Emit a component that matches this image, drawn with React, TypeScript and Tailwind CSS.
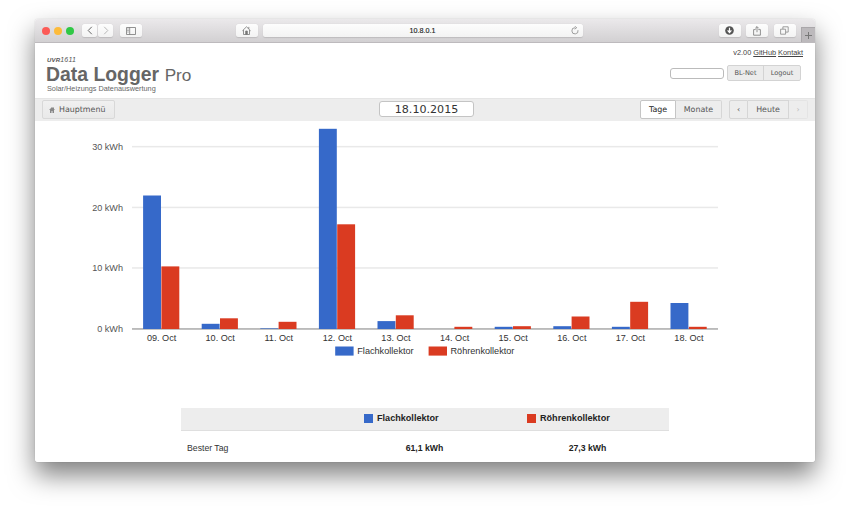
import type { ReactNode } from 'react';

const BASE = 329;
const days = [
  { label: '09. Oct', flach: 195.5, roehren: 266.4 },
  { label: '10. Oct', flach: 323.8, roehren: 318.3 },
  { label: '11. Oct', flach: 328.4, roehren: 321.8 },
  { label: '12. Oct', flach: 128.8, roehren: 224.3 },
  { label: '13. Oct', flach: 321.1, roehren: 315.3 },
  { label: '14. Oct', flach: 329, roehren: 326.8 },
  { label: '15. Oct', flach: 326.8, roehren: 326.2 },
  { label: '16. Oct', flach: 326.2, roehren: 316.5 },
  { label: '17. Oct', flach: 326.8, roehren: 301.8 },
  { label: '18. Oct', flach: 303, roehren: 326.8 },
];
const ticks = [
  { label: '30 kWh', y: 146.7 },
  { label: '20 kWh', y: 207.5 },
  { label: '10 kWh', y: 268 },
  { label: '0 kWh', y: 329 },
];

function BrowserButton({ className, children }: { className: string; children?: ReactNode }) {
  return (
    <div className={`flex h-[13.5px] items-center justify-center rounded-[2.5px] bg-gradient-to-b from-[#fdfdfd] to-[#f3f3f3] shadow-[0_0.5px_1px_rgba(0,0,0,0.12)] ${className}`}>
      {children}
    </div>
  );
}

function TitleBar() {
  return (
    <div className="relative flex h-6 shrink-0 items-center border-b border-[#bdbabd] bg-gradient-to-b from-[#ebe9eb] to-[#d2d0d2] pl-[7px]">
      <div className="flex w-8 justify-between">
        <span className="size-2 rounded-full bg-[#fc5b57]" />
        <span className="size-2 rounded-full bg-[#fdbb3b]" />
        <span className="size-2 rounded-full bg-[#30c846]" />
      </div>
      <BrowserButton className="ml-2 w-[15px]">
        <svg width="6" height="9" viewBox="0 0 6 9" fill="none" stroke="#686868" strokeWidth="1"><path d="M4.8 .8 1.2 4.5l3.6 3.7" /></svg>
      </BrowserButton>
      <BrowserButton className="ml-px w-[15px]">
        <svg width="6" height="9" viewBox="0 0 6 9" fill="none" stroke="#b8b8b8" strokeWidth="1"><path d="M1.2.8l3.6 3.7-3.6 3.7" /></svg>
      </BrowserButton>
      <BrowserButton className="ml-[6.5px] w-[22px]">
        <svg width="10" height="8" viewBox="0 0 10 8" fill="none" stroke="#777" strokeWidth=".8"><path d="M.5.5h9v7h-9zM3.7.5v7M1.4 2h1.2M1.4 3.5h1.2M1.4 5h1.2" /></svg>
      </BrowserButton>
      <BrowserButton className="ml-[94px] w-[22px]">
        <svg width="9" height="9" viewBox="0 0 9 9" fill="none" stroke="#777" strokeWidth=".8"><path d="M.4 4.8 4.5.8l4.1 4M1.5 4v4.5h6V4M6.8.9v2" /><path d="M3.7 8.3V5h1.6v3.3z" fill="#777" /></svg>
      </BrowserButton>
      <BrowserButton className="relative ml-[5px] w-[320px] text-[7.2px] text-[#222] [-webkit-text-stroke:0.15px_#222]">
        <span className="pt-[2px]">10.8.0.1</span>
        <svg className="absolute right-[4px]" width="8" height="9" viewBox="0 0 8 9" fill="none" stroke="#888" strokeWidth=".8"><path d="M4 1.7a3.1 3.1 0 1 0 3 2.5M3.7.2l2 1.5-2 1.5" /></svg>
      </BrowserButton>
      <BrowserButton className="ml-auto w-[22px]">
        <svg width="9" height="9" viewBox="0 0 9 9"><circle cx="4.5" cy="4.5" r="4.3" fill="#555" /><path d="M4.5 1.8v3.8M2.6 4.4l1.9 2.1 1.9-2.1" fill="none" stroke="#fff" strokeWidth="1.2" /></svg>
      </BrowserButton>
      <BrowserButton className="ml-[5.5px] w-[22px]">
        <svg width="8" height="10" viewBox="0 0 8 10" fill="none" stroke="#777" strokeWidth=".8"><path d="M2.7 3.6H.6v5.6h6.8V3.6H5.3M4 6.2V.7M2.2 2.4 4 .6l1.8 1.8" /></svg>
      </BrowserButton>
      <BrowserButton className="ml-[5.5px] mr-[5px] w-[22px]">
        <svg width="9" height="9" viewBox="0 0 9 9" fill="none" stroke="#888" strokeWidth=".8"><path d="M.6 3.2h5v5h-5zM2.9 3V.8h5.3v5.3H5.7" /></svg>
      </BrowserButton>
      <div className="flex h-[15px] w-[14.5px] items-center justify-center self-end border-l border-t border-[#aaa7aa] bg-[#bcb9bc]">
        <svg width="7" height="7" viewBox="0 0 7 7" stroke="#777" strokeWidth="1"><path d="M3.5 0v7M0 3.5h7" /></svg>
      </div>
    </div>
  );
}

function PageHeader() {
  return (
    <header className="flex h-[54.5px] shrink-0 justify-between pl-3 pr-3">
      <div className="flex flex-col whitespace-nowrap pt-[13px] text-[#666]">
        <div className="h-[7px] text-[7px] italic leading-[7px] tracking-[0.2px] text-[#555]"><b className="text-[6px]">UVR</b>1611</div>
        <h1 className="h-[21px] -ml-px flex items-baseline gap-[5.5px] text-[19.4px] font-bold leading-[23px]">
          <span>Data Logger</span>
          <span className="text-[17.2px] font-normal">Pro</span>
        </h1>
        <p className="text-[7.3px] leading-[10px]">Solar/Heizungs Datenauswertung</p>
      </div>
      <div className="flex flex-col items-end">
        <div className="flex gap-[2px] pt-[5px] text-[7.35px] leading-[10px] text-[#444]">
          <span>v2.00</span>
          <span className="underline">GitHub</span>
          <span className="underline">Kontakt</span>
        </div>
        <div className="mt-[7px] mr-[2px] flex items-center font-['DejaVu_Sans',sans-serif] text-[6.6px] text-[#555]">
          <div className="mr-[3px] h-[11px] w-[54px] rounded-[3px] border border-[#bbb] bg-white" />
          <div className="flex h-4 rounded-[2px] border border-[#d3d3d3] bg-[#ececec]">
            <div className="flex w-[36px] items-center justify-center border-r border-[#d3d3d3] pt-[2px]">BL-Net</div>
            <div className="flex w-[36px] items-center justify-center pt-[2px]">Logout</div>
          </div>
        </div>
      </div>
    </header>
  );
}

function Toolbar() {
  return (
    <nav className="flex h-[23.5px] shrink-0 items-center border-t border-[#e5e5e5] bg-[#ededed] pl-[7px] pr-[7px] pb-px font-['DejaVu_Sans',sans-serif] text-[7.9px] text-[#555]">
      <div className="flex h-[18.5px] w-[73px] items-center rounded-[2px] border border-[#d8d8d8] bg-gradient-to-b from-[#f0f0f0] to-[#e9e9e9] pl-[6px] pt-px">
        <svg width="6" height="6" viewBox="0 0 6 6" fill="#888"><path d="M3 0 0 3h1v3h1.5V4h1v2H5V3h1L5 2V.4H4v.7z" /></svg>
        <span className="ml-[4px]">Hauptmenü</span>
      </div>
      <div className="ml-[264px] flex h-[16px] w-[95px] items-center justify-center rounded-[3px] border border-[#c4c4c4] bg-white pt-[2px] text-[11.1px] text-[#333]">18.10.2015</div>
      <div className="ml-auto flex h-[19px]">
        <div className="flex w-[36px] items-center justify-center rounded-l-[2px] border border-[#c5c5c5] bg-white pt-px text-[#222]">Tage</div>
        <div className="flex w-[46px] items-center justify-center rounded-r-[2px] border border-l-0 border-[#d6d6d6] pt-px">Monate</div>
      </div>
      <div className="ml-[7px] flex h-[19px]">
        <div className="flex w-[19px] items-center justify-center rounded-l-[2px] border border-[#d6d6d6] pt-px">‹</div>
        <div className="flex w-[41px] items-center justify-center border-y border-r border-[#d6d6d6] pt-px">Heute</div>
        <div className="flex w-[19px] items-center justify-center rounded-r-[2px] border border-l-0 border-[#e4e4e4] pt-px text-[#bbb]">›</div>
      </div>
    </nav>
  );
}

function Chart() {
  return (
    <svg className="block shrink-0" width="780" height="240" viewBox="35 121 780 240" fontSize="9.1" fill="#333">
      {ticks.map((t) => (
        <g key={t.label}>
          {t.y < BASE && <rect x="132" y={t.y - 0.8} width="586" height="1.5" fill="#e9e9e9" />}
          <text x="123" y={t.y + 3.2} textAnchor="end" fill="#555">{t.label}</text>
        </g>
      ))}
      <rect x="132" y="328.2" width="586" height="1.5" fill="#aaa" />
      {days.map((d, i) => {
        const x = 143.1 + i * 58.6;
        return (
          <g key={d.label}>
            <rect x={x} y={d.flach} width="17.9" height={BASE - d.flach} fill="#3669c9" />
            <rect x={x + 18.3} y={d.roehren} width="17.9" height={BASE - d.roehren} fill="#da3b21" />
            <text x={x + 18.5} y="341.3" textAnchor="middle">{d.label}</text>
          </g>
        );
      })}
      <rect x="335.2" y="346.5" width="18.4" height="9.1" fill="#3669c9" />
      <text x="357.3" y="354.4" fontSize="9.15">Flachkollektor</text>
      <rect x="428.6" y="346.5" width="18.4" height="9.1" fill="#da3b21" />
      <text x="450.5" y="354.4" fontSize="9.15">Röhrenkollektor</text>
    </svg>
  );
}

function Summary() {
  return (
    <div className="ml-[146px] mt-[47px] w-[488px] text-[9.1px] text-[#222]">
      <div className="grid h-[22.5px] grid-cols-[162px_163px_163px] items-center border-b border-[#dfdfdf] bg-[#ededed] font-bold">
        <span />
        <div className="flex items-center pl-[21px]"><i className="mr-1 size-[9px] bg-[#3669c9]" />Flachkollektor</div>
        <div className="flex items-center pl-[21px]"><i className="mr-1 size-[9px] bg-[#da3b21]" />Röhrenkollektor</div>
      </div>
      <div className="mt-[11px] grid grid-cols-[162px_163px_163px] text-[8.7px] leading-[13px]">
        <span className="pl-[6px] text-[#333]">Bester Tag</span>
        <b className="text-center">61,1 kWh</b>
        <b className="text-center">27,3 kWh</b>
      </div>
    </div>
  );
}

export default function App() {
  return (
    <main className="h-[511px] w-[850px] overflow-hidden bg-white pl-[35px] pt-[19px] font-['Liberation_Sans',Arial,sans-serif]">
      <div className="w-[780px] rounded-[3px] shadow-[0_0_1px_rgba(0,0,0,0.3),0_13px_26px_rgba(0,0,0,0.5)]">
        <div className="flex h-[442.5px] flex-col overflow-hidden rounded-[3px] bg-white">
          <TitleBar />
          <PageHeader />
          <Toolbar />
          <Chart />
          <Summary />
        </div>
      </div>
    </main>
  );
}
